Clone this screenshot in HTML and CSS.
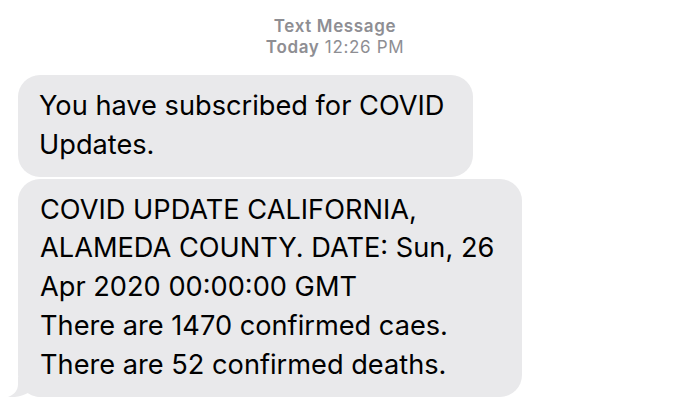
FILE: index.html
```html
<!DOCTYPE html>
<html lang="en">
<head>
<meta charset="utf-8">
<title>Text Message</title>
<link rel="stylesheet" href="styles.css">
</head>
<body>
<div class="thread">
  <header class="meta">
    <div class="meta-title">Text Message</div>
    <div class="meta-time"><span class="meta-day">Today</span> 12:26 PM</div>
  </header>
  <div class="messages">
    <div class="bubble bubble-first">You have subscribed for COVID<br>Updates.</div>
    <div class="bubble bubble-last">COVID UPDATE CALIFORNIA,<br>ALAMEDA COUNTY. DATE: Sun, 26<br>Apr 2020 00:00:00 GMT<br>There are 1470 confirmed caes.<br>There are 52 confirmed deaths.
      <svg class="tail" width="34" height="20" viewBox="0 0 34 20" aria-hidden="true"><path d="M10 0 V7 C10 13.5 6.5 17.5 0 20 C6 20.8 14 19.2 21.5 15.2 C25 18.2 28.5 20 34 20 V0 Z" fill="#e9e9eb"/></svg>
    </div>
  </div>
</div>
</body>
</html>
```
FILE: styles.css
```css
html, body {
  margin: 0;
  padding: 0;
  background: #ffffff;
}
body {
  width: 686px;
  height: 420px;
  overflow: hidden;
  font-family: "Inter", "Liberation Sans", Arial, sans-serif;
}
.thread {
  display: flex;
  flex-direction: column;
  padding-top: 16px;
}
.meta {
  display: flex;
  flex-direction: column;
  align-items: center;
  color: #8e8e93;
  font-size: 17px;
  line-height: 21px;
  letter-spacing: 0.65px;
  padding-right: 16px;
}
.meta-title {
  font-weight: 600;
}
.meta-day {
  font-weight: 600;
}
.messages {
  display: flex;
  flex-direction: column;
  align-items: flex-start;
  gap: 2px;
  padding-left: 18px;
  margin-top: 17px;
}
.bubble {
  position: relative;
  box-sizing: border-box;
  background: #e9e9eb;
  color: #000000;
  border-radius: 22px;
  padding: 12px 20px 12px 21px;
  font-size: 27.2px;
  line-height: 38.8px;
  white-space: nowrap;
}
.bubble-first {
  width: 455px;
}
.bubble-last {
  width: 504px;
  padding-left: 22px;
}
.tail {
  position: absolute;
  left: -10px;
  bottom: 0;
  display: block;
}
```
